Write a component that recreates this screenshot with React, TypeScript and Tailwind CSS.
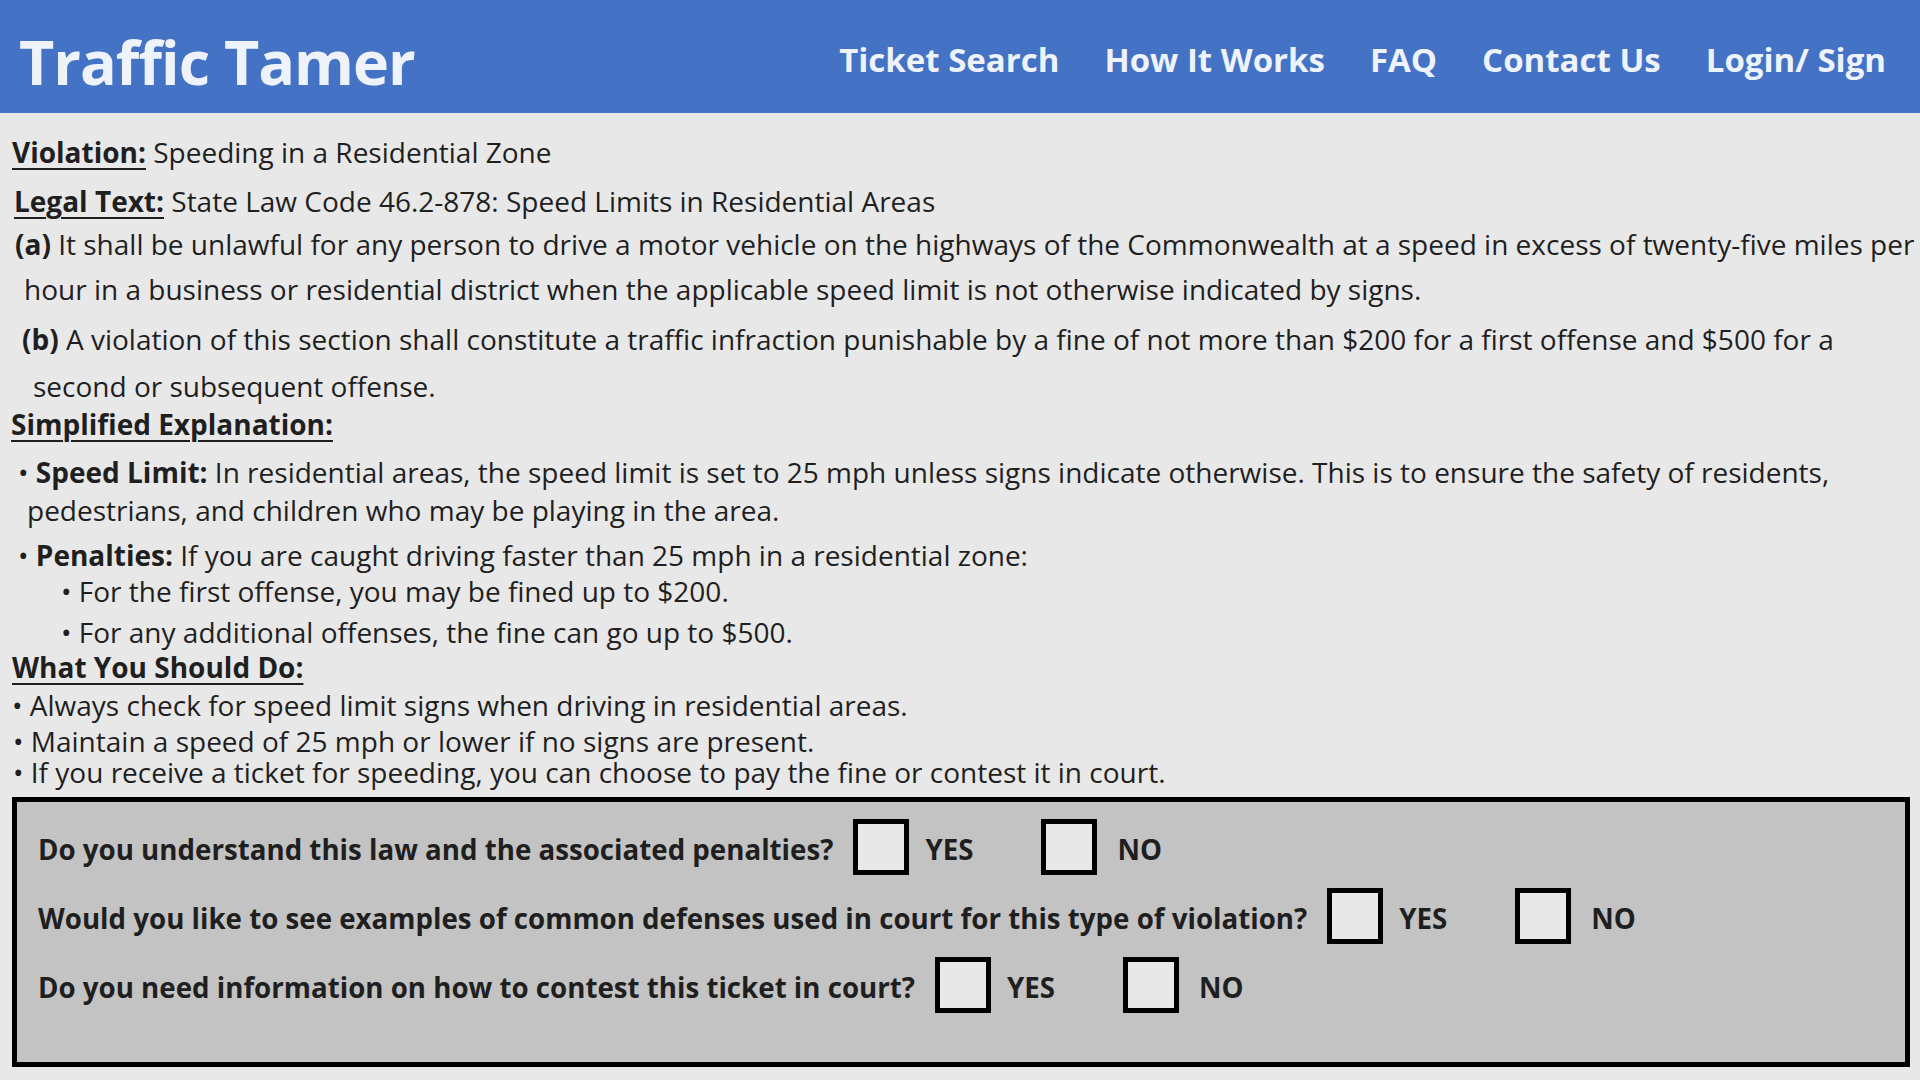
import React from "react";

const font = { fontFamily: '"Open Sans", "Noto Sans", sans-serif' };

function Checkbox() {
	return <span className="inline-block w-[56px] h-[56px] border-[5px] border-black bg-[#e8e8e8] shrink-0" />;
}

interface QuestionProps {
	text: string;
}

function Question({ text }: QuestionProps) {
	return (
		<div className="flex items-center h-[56px] text-[27.7px]">
			<span className="font-bold">{text}</span>
			<span className="ml-[20px]">
				<Checkbox />
			</span>
			<span className="ml-[16px] font-bold">YES</span>
			<span className="ml-[68px]">
				<Checkbox />
			</span>
			<span className="ml-[20px] font-bold">NO</span>
		</div>
	);
}

export default function App() {
	return (
		<div className="min-h-screen bg-[#e8e8e8] text-[#1f1f1f]" style={font}>
			<header className="h-[113px] bg-[#4472c4] flex items-center justify-between pl-[19px] pr-[34px] text-[#eef2fb]">
				<h1 className="text-[61px] font-bold tracking-[-1px] pt-[10px]">Traffic Tamer</h1>
				<nav className="flex items-center gap-[45px] text-[33px] font-bold pt-[6px]">
					<a>Ticket Search</a>
					<a>How It Works</a>
					<a>FAQ</a>
					<a>Contact Us</a>
					<a>Login/ Sign</a>
				</nav>
			</header>

			<main className="pt-[24px] text-[28px] leading-[30px] whitespace-nowrap">
				<p className="pl-[12px]">
					<span className="font-bold underline decoration-2 underline-offset-[5px]">Violation:</span> Speeding in a Residential Zone
				</p>
				<p className="pl-[14px] mt-[19px]">
					<span className="font-bold underline decoration-2 underline-offset-[5px]">Legal Text:</span> State Law Code 46.2-878: Speed Limits in Residential Areas
				</p>
				<p className="pl-[15px] mt-[13px]">
					<span className="font-bold">(a)</span> It shall be unlawful for any person to drive a motor vehicle on the highways of the Commonwealth at a speed in excess of twenty-five miles per
				</p>
				<p className="pl-[24px] mt-[15px]">hour in a business or residential district when the applicable speed limit is not otherwise indicated by signs.</p>
				<p className="pl-[22px] mt-[20px]">
					<span className="font-bold">(b)</span> A violation of this section shall constitute a traffic infraction punishable by a fine of not more than $200 for a first offense and $500 for a
				</p>
				<p className="pl-[33px] mt-[17px]">second or subsequent offense.</p>

				<p className="pl-[11px] mt-[8px]">
					<span className="font-bold underline decoration-2 underline-offset-[5px]">Simplified Explanation:</span>
				</p>
				<p className="pl-[18px] mt-[18px]">
					• <span className="font-bold">Speed Limit:</span> In residential areas, the speed limit is set to 25 mph unless signs indicate otherwise. This is to ensure the safety of residents,
				</p>
				<p className="pl-[27px] mt-[8px]">pedestrians, and children who may be playing in the area.</p>
				<p className="pl-[18px] mt-[15px]">
					• <span className="font-bold">Penalties:</span> If you are caught driving faster than 25 mph in a residential zone:
				</p>
				<p className="pl-[61px] mt-[6px]">• For the first offense, you may be fined up to $200.</p>
				<p className="pl-[61px] mt-[11px]">• For any additional offenses, the fine can go up to $500.</p>

				<p className="pl-[12px] mt-[5px]">
					<span className="font-bold underline decoration-2 underline-offset-[5px]">What You Should Do:</span>
				</p>
				<p className="pl-[12px] mt-[8px]">• Always check for speed limit signs when driving in residential areas.</p>
				<p className="pl-[13px] mt-[6px]">• Maintain a speed of 25 mph or lower if no signs are present.</p>
				<p className="pl-[13px] mt-[1px]">• If you receive a ticket for speeding, you can choose to pay the fine or contest it in court.</p>

				<section className="mt-[10px] ml-[12px] mr-[10px] h-[270px] border-[5px] border-black bg-[#c3c3c3] pl-[21px] pt-[19px] flex flex-col gap-[13px]">
					<Question text="Do you understand this law and the associated penalties?" />
					<Question text="Would you like to see examples of common defenses used in court for this type of violation?" />
					<Question text="Do you need information on how to contest this ticket in court?" />
				</section>
			</main>
		</div>
	);
}
